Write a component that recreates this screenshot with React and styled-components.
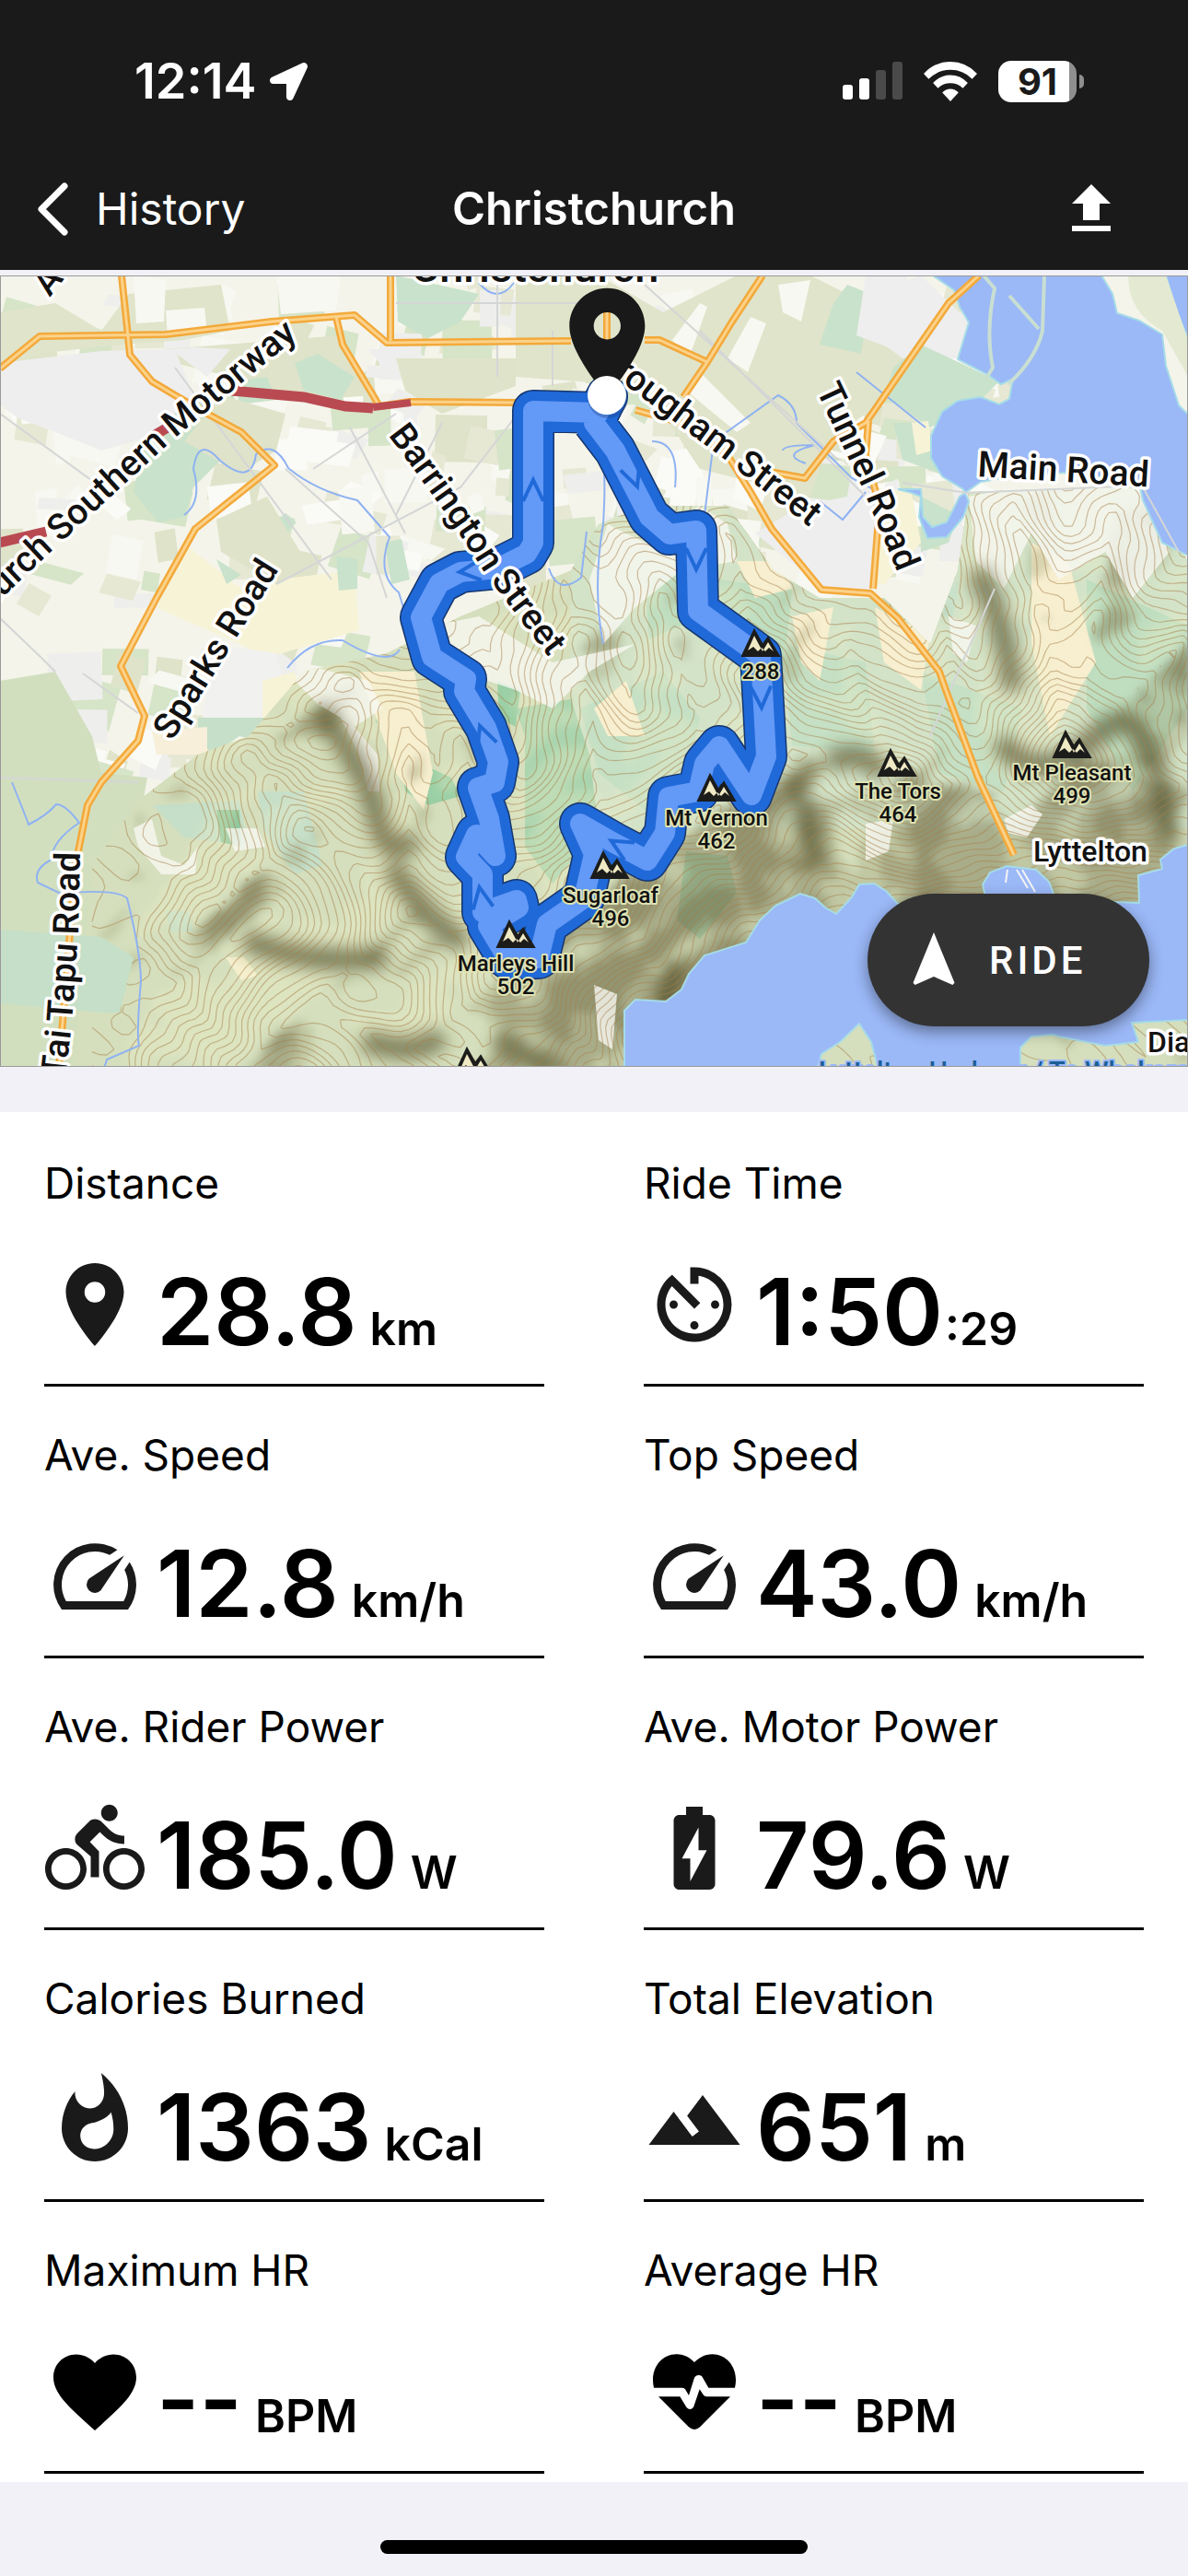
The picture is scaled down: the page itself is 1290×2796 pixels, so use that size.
import styled, { createGlobalStyle } from "styled-components";
import {
    MdPlace,
    MdAvTimer,
    MdDirectionsBike,
    MdBatteryChargingFull,
    MdWhatshot,
    MdTerrain,
    MdFavorite,
    MdNavigation,
    MdUpload,
} from "react-icons/md";
import { FaLocationArrow } from "react-icons/fa";

const GlobalStyle = createGlobalStyle`
    * { box-sizing: border-box; }
    body {
        margin: 0;
        background-color: #f2f1f7;
        color: #000;
        font-family: Inter, "Liberation Sans", sans-serif;
    }
`

/* Terrain  */

const RIDGES = [
    [270, 520, 0.4, 340, 600, 0.55], [340, 600, 0.55, 450, 690, 0.8], [450, 690, 0.8, 560, 745, 1],
    [560, 745, 1, 663, 660, 1], [663, 660, 1, 778, 580, 0.95], [778, 580, 0.95, 860, 520, 0.85],
    [860, 520, 0.85, 975, 545, 0.95], [975, 545, 0.95, 1070, 560, 0.7], [1070, 560, 0.7, 1164, 520, 1],
    [1164, 520, 1, 1290, 560, 0.8], [663, 660, 0.9, 630, 400, 0.5], [630, 400, 0.5, 600, 300, 0.35],
    [778, 580, 0.8, 715, 330, 0.5], [826, 430, 0.75, 790, 280, 0.45], [860, 520, 0.8, 826, 430, 0.75],
    [975, 545, 0.9, 920, 400, 0.5], [1164, 520, 0.9, 1100, 250, 0.55], [1164, 520, 0.9, 1210, 260, 0.5],
    [1164, 520, 0.9, 1285, 400, 0.6], [450, 690, 0.8, 440, 480, 0.45], [560, 745, 0.9, 500, 500, 0.5],
    [560, 745, 1, 430, 859, 0.7], [330, 600, 0.5, 200, 720, 0.25], [450, 690, 0.7, 260, 859, 0.6],
    [515, 859, 1, 330, 800, 0.6], [560, 745, 0.9, 660, 859, 0.5], [663, 660, 0.9, 730, 770, 0.4],
    [778, 580, 0.8, 820, 700, 0.3], [860, 520, 0.8, 905, 660, 0.3], [975, 545, 0.8, 1000, 660, 0.3],
    [300, 500, 0.3, 380, 440, 0.3], [1040, 440, 0.5, 1010, 340, 0.3],
]

function height(x, y) {
    let total = 0
    for (const [x1, y1, h1, x2, y2, h2] of RIDGES) {
        const dx = x2 - x1
        const dy = y2 - y1
        const t = Math.max(0, Math.min(1, ((x - x1) * dx + (y - y1) * dy) / (dx * dx + dy * dy)))
        const d = Math.hypot(x - x1 - t * dx, y - y1 - t * dy)
        const v = Math.max(0, h1 + (h2 - h1) * t - d / 200)
        total += v ** 5
    }
    const noise =
        Math.sin(x / 17 + 2 * Math.sin(y / 29)) * Math.sin(y / 19 + Math.sin(x / 23)) * 0.04 +
        Math.sin(x / 37 - y / 31) * 0.04
    return total ** 0.2 + noise
}

// marching squares over a coarse grid, one path for all levels
function buildContours() {
    const s = 8
    let d = ""
    for (let y = 200; y < 860; y += s) {
        for (let x = 100; x < 1290; x += s) {
            const c = [[x, y], [x + s, y], [x + s, y + s], [x, y + s]]
            const h = c.map(([a, b]) => height(a, b))
            const lo = Math.ceil(Math.min(...h) / 0.045)
            const hi = Math.floor(Math.max(...h) / 0.045)
            for (let n = lo; n <= hi; n++) {
                const level = n * 0.045
                const pts = []
                for (let i = 0; i < 4; i++) {
                    const j = (i + 1) % 4
                    if (h[i] < level !== h[j] < level) {
                        const t = (level - h[i]) / (h[j] - h[i])
                        pts.push(
                            (c[i][0] + (c[j][0] - c[i][0]) * t).toFixed(1) + " " +
                            (c[i][1] + (c[j][1] - c[i][1]) * t).toFixed(1)
                        )
                    }
                }
                for (let i = 0; i + 1 < pts.length; i += 2) d += `M${pts[i]}L${pts[i + 1]}`
            }
        }
    }
    return d
}

// slopes facing away from the north-west light get darker
function buildShade() {
    const s = 8
    const tones = ["", "", "", ""]
    for (let y = 200; y < 860; y += s) {
        for (let x = 100; x < 1290; x += s) {
            const slope = height(x, y) - height(x + 10, y + 10)
            const cell = `M${x} ${y}h${s}v${s}h-${s}z`
            if (slope < -0.05) tones[0] += cell
            if (slope > 0.03) tones[1] += cell
            if (slope > 0.055) tones[2] += cell
            if (slope > 0.085) tones[3] += cell
        }
    }
    return tones
}

// small farm and suburb parcels
function buildParcels() {
    const colors = ["#dfe3c9", "#f8f8f2", "#eeeeec", "#e6e8d3", "#d6e4c8", "#fafaf6"]
    const out = []
    let seed = 7
    const rnd = () => {
        seed = (seed * 16807) % 2147483647
        return seed / 2147483647
    }
    for (let i = 0; i < 330; i++) {
        const x = rnd() * 1080
        const y = rnd() * (x < 350 ? 560 : 310)
        const w = 14 + rnd() * 44
        const h = 12 + rnd() * 40
        const k = (rnd() - 0.3) * 22
        out.push([
            colors[Math.floor(rnd() * colors.length)],
            `${x},${y} ${x + w},${y + k} ${x + w - k},${y + h + k} ${x - k},${y + h}`,
        ])
    }
    return out
}

const CONTOURS = buildContours()
const [LIT, SHADE1, SHADE2, SHADE3] = buildShade()
const PARCELS = buildParcels()

const LAND = [
    ["#e0e4ca", "0,40 60,30 110,60 140,20 240,10 250,60 200,70 130,75 40,85 0,110"],
    ["#f8f8f2", "145,0 180,5 178,50 148,52"],
    ["#f8f8f2", "180,38 222,35 225,62 182,66"],
    ["#f8f8f2", "300,0 370,0 365,38 305,42"],
    ["#e0e4ca", "560,0 650,0 720,40 800,0 880,0 960,40 1010,60 980,120 900,180 880,240 760,210 700,120 560,110"],
    ["#f8f8f2", "730,70 760,30 768,34 748,90"],
    ["#f8f8f2", "790,90 815,45 832,52 812,105"],
    ["#f8f8f2", "745,125 760,105 815,160 800,170"],
    ["#f8f8f2", "845,10 880,5 870,50 850,40"],
    ["#dfe3c9", "180,80 370,65 410,130 330,135 250,110 190,95"],
    ["#dfe3c9", "430,90 560,90 560,120 480,150 440,125"],
    ["#c9e2cb", "430,0 520,20 500,50 465,68 432,50"],
    ["#c9e2cb", "160,165 250,120 270,180 240,200 210,230 200,262 172,268 145,235"],
    ["#c9e2cb", "320,95 345,85 385,110 370,135 330,125"],
    ["#c9e2cb", "255,115 290,110 300,135 260,140"],
    ["#eeeeee", "0,95 110,82 190,80 210,130 165,175 110,190 60,170 20,155 0,140"],
    ["#eeeeee", "185,80 225,110 250,80 210,78"],
    ["#eeeeee", "400,80 435,80 420,105"],
    ["#f7f3d7", "205,295 262,340 300,330 385,320 390,385 290,415 250,395 190,370 170,360"],
    ["#c9e2cb", "365,305 388,308 388,340 368,342"],
    ["#c9e2cb", "235,308 262,325 246,335"],
    ["#c9e2cb", "290,275 310,258 322,268 300,290"],
    ["#c9e2cb", "418,290 436,286 445,330 425,335"],
    ["#dfe3c9", "235,265 290,240 335,315 300,335 240,300"],
    ["#dfe3c9", "200,180 240,130 310,150 300,190 260,215"],
    ["#f1f1f0", "230,400 300,410 320,490 220,480"],
    ["#f7f3d7", "285,440 320,430 335,500 285,480"],
    ["#c5dfc8", "215,480 320,480 320,495 300,508 260,500 230,520 215,500"],
    ["#f7efd9", "165,495 225,490 225,520 170,520"],
    ["#eeeeee", "970,10 1000,0 1052,50 1040,90 980,90 940,60 950,20"],
    ["#c9e2cb", "905,30 920,10 945,20 935,85 890,75"],
    ["#c9e2cb", "1000,75 1085,115 1060,140 1010,165 960,130 970,100"],
    ["#c9e2cb", "970,160 1000,160 1020,215 980,200"],
    ["#f7f3d7", "990,160 1008,158 1012,190 995,195"],
    ["#eeeeee", "820,280 870,250 920,240 955,240 945,345 895,340"],
    ["#eeeeee", "940,0 985,0 970,80 930,65"],
    ["#f7f3d7", "950,230 990,235 1000,290 960,335 948,335"],
    ["#c9e2cb", "1000,240 1040,260 1030,290 1000,300"],
]

const WOODS = [
    ["#c6dfc8", "165,575 260,570 270,620 200,610"],
    ["#8fc79c", "235,580 260,580 262,620 240,615"],
    ["#c6dfc8", "280,560 330,560 350,640 320,650 285,600"],
    ["#c6dfc8", "180,690 205,690 210,712 185,712"],
    ["#9bcfa5", "410,455 430,450 430,495 408,485"],
    ["#9bcfa5", "435,520 490,545 500,565 465,575 440,560"],
    ["#a9d4ae", "560,470 620,460 640,520 650,600 600,660 570,620 570,500"],
    ["#9bcfa5", "540,440 565,450 560,490 542,480"],
    ["#c5e0c4", "630,470 720,430 760,480 740,560 700,580 650,540"],
    ["#bfdec0", "780,330 860,340 850,440 790,400"],
    ["#bfdec0", "700,330 740,320 740,380 705,395"],
    ["#c5e0c4", "850,400 940,420 950,520 860,510"],
    ["#c5e0c4", "1000,430 1110,470 1090,560 1020,540"],
    ["#a9d4ae", "745,625 790,630 800,670 760,720 735,700"],
    ["#c9e2cb", "1010,310 1045,310 1035,370 1015,370"],
    ["#bfdec0", "1180,330 1290,380 1290,470 1230,560 1180,470"],
    ["#f7efd0", "950,360 1010,390 1000,450 960,420"],
    ["#f7efd0", "800,310 850,310 860,340 820,350"],
    ["#f7efd0", "860,370 905,360 890,440 870,420"],
    ["#f7efd0", "390,430 450,430 470,540 460,580 430,540"],
    ["#f7efd0", "1120,290 1160,310 1190,420 1140,500 1120,400"],
    ["#f7efd0", "645,470 680,440 700,500 660,500"],
    ["#f7efd0", "245,740 265,740 280,760 262,765"],
]

const BARE = [
    "315,435 340,425 400,440 415,470 385,490 410,520 412,560 400,560 390,520 370,480 345,465",
    "470,380 520,370 600,420 690,400 640,430 600,470 560,450 500,430",
    "660,270 700,290 760,250 790,270 800,310 740,320 690,360 655,400 640,330",
    "1052,240 1130,225 1240,232 1270,300 1230,350 1200,300 1150,330 1120,280 1090,340 1060,310",
    "145,600 165,590 175,630 200,640 215,620 212,650 175,650 150,620",
    "245,600 280,600 288,620 255,625",
    "1090,590 1120,575 1132,585 1115,610 1095,605",
    "1030,370 1060,380 1050,420 1035,410",
    "940,595 970,590 965,625 940,635",
    "645,770 670,780 665,840 650,830",
]

const DARK_SPOTS = [
    "M345 470 Q400 540 410 590 T450 610",
    "M425 640 Q460 700 505 725",
    "M265 720 Q330 750 420 740",
    "M395 830 Q450 850 480 825",
    "M900 530 Q930 510 960 540",
    "M860 545 Q880 600 890 640",
    "M1085 505 Q1130 560 1190 500 T1270 620",
    "M1060 320 Q1090 370 1100 450",
    "M730 810 Q710 780 740 750",
    "M540 825 Q570 850 600 859",
]

const WATER = [
    "1013,0 1036,16 1042,34 1052,51 1040,91 1073,108 1087,118 1100,112 1096,134 1085,140 1065,132 1040,136 1023,148 1011,174 1011,198 1023,218 1046,232 1052,245 1046,262 1028,284 1007,285 998,262 1000,240 990,236 975,232 1000,232 1002,262 1012,273 1028,268 1042,240 1065,224 1110,216 1159,214 1237,224 1241,244 1262,290 1290,304 1290,151 1280,141 1266,98 1262,64 1237,49 1213,41 1208,20 1196,0",
    "1266,0 1290,0 1290,68 1278,40",
    "678,859 678,798 690,786 723,788 740,775 748,758 765,738 810,724 825,700 842,684 869,671 885,676 896,686 908,693 925,675 933,661 949,660 962,668 974,681 1000,700 1130,700 1210,680 1237,681 1236,651 1262,644 1260,634 1275,622 1290,618 1290,808 1229,811 1236,832 1200,836 1150,826 1143,824 1120,826 1108,838 1108,859 953,859 946,832 933,812 912,832 892,845 888,859",
    "1067,661 1075,648 1093,641 1125,645 1139,658 1145,674 1070,674",
]

const STREAMS = [
    "M520 8 q20 24 38 0",
    "M200 260 q20 -14 10 -50 q5 -36 28 -10 q35 30 40 -6 q20 -16 35 15 q30 25 75 35 l35 40 q-15 40 10 60 l8 26",
    "M312 426 q25 -32 60 -30 q50 30 62 10",
    "M13 550 q20 50 18 46 q20 -10 30 -22 q10 0 25 20 q-30 20 -30 40 q-20 10 -15 25 l25 12 q60 -6 72 5 q15 60 15 90 q-5 60 -2 70 l-35 15 l-12 40",
    "M655 400 q-12 -60 0 -130 q5 -80 -8 -100 M708 180 q30 0 25 50 M765 260 l10 -80 l70 -50 q20 10 20 30 l60 60 l50 26",
    "M850 190 q0 -6 35 -6 q-40 10 -10 20 M930 105 l75 60 M890 245 l25 20 l25 -30",
    "M596 318 q10 30 35 10 l6 -50",
]

const MAJOR_ROADS = [
    "M0 101 L43 66 L180 64 L295 50 L385 43 L420 73 L620 71",
    "M132 0 L139 66 L141 86 L165 115 L190 130 L225 150 L262 170 L298 206 L212 275 L170 350 L131 424 L157 478 L150 505 L110 550 L95 575 L82 640 L64 859",
    "M365 45 L372 75 L405 130 L412 142 L445 137 L560 138",
    "M424 0 L424 71",
    "M659 28 L659 71 M700 70 L716 70 L768 94 L742 132 M768 94 L795 50 L828 0",
    "M1063 0 L1030 30 L940 160 L905 180 L874 220 L830 212 M943 158 L940 195 L955 250 L948 340",
    "M690 146 L740 160 L790 195 L815 235 L838 275 L892 341 L945 345 L975 372 L1020 430 L1027 450 L1062 545 L1101 629",
]

const MINOR_ROADS = [
    "M0 372 L45 415 L60 430", "M190 100 L360 330 M300 335 L500 230 L570 140", "M310 210 L400 290 L420 350",
    "M0 150 L110 230", "M470 140 L560 140", "M480 160 L430 260", "M380 165 L440 280", "M340 210 L430 150",
    "M700 10 L910 200 M760 60 L950 250", "M600 60 L600 120", "M980 225 L1050 236 L1240 228 L1280 300",
    "M0 545 L150 550 M90 432 L150 475", "M430 30 L640 30 M540 0 L540 110", "M1010 500 L1080 340",
]

const ROUTE =
    "M659 131 L650 149 L579 147 L579 290 L572 302 L540 318 L500 322 L477 334 L457 371 L469 414 L506 438 L504 451 L528 491 L541 528 L537 550 L519 556 L531 590 L538 630 L517 607 L506 631 L524 650 L524 691 L561 678 L563 686 L530 706 L551 741 L585 741 L594 704 L634 676 L645 628 L630 595 L665 615 L703 635 L722 605 L726 566 L758 560 L765 530 L781 511 L816 564 L832 522 L826 413 L758 364 L756 277 L727 281 L705 262 L668 190 L645 160"

const ARROWS = [
    [579, 219, 0], [496, 322, -95], [520, 486, -20], [520, 661, -10],
    [693, 232, 160], [756, 322, 180], [827, 472, 178], [661, 612, -60],
]

const PEAKS = [
    [826, 413, 826, 438, "", "288"],
    [778, 570, 778, 597, "Mt Vernon", "462"],
    [662, 654, 663, 681, "Sugarloaf", "496"],
    [560, 729, 560, 755, "Marleys Hill", "502"],
    [974, 543, 975, 568, "The Tors", "464"],
    [1164, 523, 1164, 548, "Mt Pleasant", "499"],
    [514, 867, 514, 900, "", ""],
]

const ROAD_LABELS = [
    ["motorway", "M-140 481 L0 352 L68 288 L195 172 L324 66", "Christchurch Southern Motorway", "end"],
    ["barrington", "M421 173 Q486 258 527 324 L620 446", "Barrington Street", "start"],
    ["brougham", "M610 62 L682 121 L779 194 L879 273", "Brougham Street", "end"],
    ["tunnel", "M886 124 L938 234 L990 360", "Tunnel Road", "start"],
    ["sparks", "M187 506 L259 390 L320 292", "Sparks Road", "start"],
    ["main", "M1061 218 L1290 232", "Main Road", "start"],
    ["taitapu", "M68 900 L78 811 L85 714 L87 626", "Tai Tapu Road", "end"],
]

function RideMap() {
    return (
        <MapSvg viewBox="0 0 1290 859" preserveAspectRatio="xMidYMid slice" role="img" aria-label="Ride map">
            <defs>
                <filter id="soft" x="-5%" y="-5%" width="110%" height="110%">
                    <feGaussianBlur stdDeviation="5" />
                </filter>
                <filter id="softer" x="-20%" y="-20%" width="140%" height="140%">
                    <feGaussianBlur stdDeviation="9" />
                </filter>
                <clipPath id="hills">
                    <path d="M80 859 L90 760 L100 640 L150 570 L215 520 L270 500 L330 430 L420 410 L500 370 L620 320 L650 270 L700 250 L790 250 L840 320 L890 350 L960 350 L1010 400 L1040 320 L1052 235 L1240 228 L1290 310 L1290 859 Z" />
                </clipPath>
                {ROAD_LABELS.map(([id, d]) => <path key={id} id={id} d={d} />)}
            </defs>

            <rect width="1290" height="859" fill="#f4f4ea" />
            {PARCELS.map(([fill, points], i) => <polygon key={i} fill={fill} points={points} />)}
            {LAND.map(([fill, points], i) => <polygon key={i} fill={fill} points={points} />)}
            <path d="M0 440 L60 430 L100 500 L110 540 L160 545 L150 600 L200 859 L0 859 Z" fill="#d2dfbf" />

            <g clipPath="url(#hills)">
                <rect y="200" width="1290" height="659" fill="#d5dfbd" />
                <rect x="620" y="200" width="670" height="400" fill="#d3e3c8" />
                {WOODS.map(([fill, points], i) => <polygon key={i} fill={fill} points={points} />)}
                <g filter="url(#soft)">
                    <path d={LIT} fill="#eef0c8" opacity="0.3" />
                    <path d={SHADE1} fill="#87895f" opacity="0.28" />
                    <path d={SHADE2} fill="#73724c" opacity="0.3" />
                    <path d={SHADE3} fill="#5f5c3a" opacity="0.3" />
                </g>
                {BARE.map((points, i) => <polygon key={i} fill="#f8f7f1" opacity="0.8" points={points} />)}
                <g filter="url(#softer)" fill="none" stroke="#46421f" strokeWidth="24" opacity="0.6">
                    {DARK_SPOTS.map((d) => <path key={d} d={d} />)}
                </g>
                <path d={CONTOURS} fill="none" stroke="#a87f4c" strokeWidth="1.2" opacity="0.5" />
            </g>
            <polygon points="0,710 110,718 145,740 130,800 110,800 0,790" fill="#c5dfc8" />

            <g fill="#9bb8f7" stroke="#a5dbe8" strokeWidth="2">
                {WATER.map((points) => <polygon key={points} points={points} />)}
            </g>
            <g fill="none" stroke="#c9dfd2" strokeWidth="4">
                <path d="M1068 0 L1080 14 Q1070 60 1078 100 L1072 110" />
                <path d="M1134 0 L1132 60 Q1125 90 1095 118 M1096 22 L1128 58" />
            </g>
            <path d="M1225 0 L1266 0 L1290 70 L1290 110 L1262 60 Q1225 40 1225 0" fill="#e4ead2" />
            <path d="M1092 659 l2 -14 M1104 645 l12 20 M1110 645 l14 24" stroke="#f4f4f4" strokeWidth="2" />

            <g fill="none" stroke="#8fb2f2" strokeWidth="2">
                {STREAMS.map((d) => <path key={d} d={d} />)}
            </g>
            <g fill="none" stroke="#d4d6d6" strokeWidth="2">
                {MINOR_ROADS.map((d) => <path key={d} d={d} />)}
            </g>
            <g fill="none" stroke="#f3a93a" strokeWidth="8" strokeLinejoin="round">
                {MAJOR_ROADS.map((d) => <path key={d} d={d} />)}
            </g>
            <g fill="none" stroke="#fbd28a" strokeWidth="3" strokeLinejoin="round">
                {MAJOR_ROADS.map((d) => <path key={d} d={d} />)}
            </g>
            <path d="M0 290 L50 278 M165 175 L182 165 M250 125 L330 132 L375 142 L405 144" fill="none" stroke="#b94a52" strokeWidth="11" />
            <path d="M405 143 L446 138" stroke="#b94a52" strokeWidth="8" />

            <g fill="none" strokeLinejoin="round" strokeLinecap="round">
                <path d={ROUTE} stroke="#16366e" strokeWidth="46" />
                <path d={ROUTE} stroke="#2069d8" strokeWidth="43" />
                <path d={ROUTE} stroke="#6399f7" strokeWidth="22" />
            </g>
            {ARROWS.map(([x, y, r]) => (
                <path
                    key={`${x}-${y}`}
                    d="M-11 26 L0 3 L11 26"
                    transform={`translate(${x} ${y}) rotate(${r})`}
                    fill="none"
                    stroke="#2069d8"
                    strokeWidth="4"
                />
            ))}

            {ROAD_LABELS.map(([id, , label, anchor]) => (
                <RoadLabel key={id} $size={39} textAnchor={anchor}>
                    <textPath href={`#${id}`} startOffset={anchor === "end" ? "100%" : "0"}>{label}</textPath>
                </RoadLabel>
            ))}
            <RoadLabel $size={47} x="581" y="7" textAnchor="middle">Christchurch</RoadLabel>
            <RoadLabel $size={39} transform="translate(54 24) rotate(-52)">A</RoadLabel>
            <RoadLabel $size={32} x="1184" y="636" textAnchor="middle">Lyttelton</RoadLabel>
            <RoadLabel $size={32} x="1246" y="843">Dia</RoadLabel>
            <HarbourLabel x="889" y="874">Lyttelton Harbour / Te Whakaraupō</HarbourLabel>

            {PEAKS.map(([x, y, tx, ty, name, metres]) => (
                <g key={`${x}-${y}`}>
                    <path
                        d="M-20 0 L-7 -28 L2 -12 L8 -20 L20 0 Z"
                        transform={`translate(${x} ${y})`}
                        fill="#1c1c1a"
                        stroke="#1c1c1a"
                        strokeWidth="2"
                    />
                    <path
                        d="M-14 -6 L-7 -22 L2 -5 L8 -15 L14 -5 L9 -9 L5 -5 L1 -9 L-3 -5 L-8 -10 Z"
                        transform={`translate(${x} ${y})`}
                        fill="#efeac4"
                    />
                    {metres && <PeakLabel x={tx} y={ty} textAnchor="middle">{name || metres}</PeakLabel>}
                    {name && <PeakLabel x={tx} y={ty + 25} textAnchor="middle">{metres}</PeakLabel>}
                </g>
            ))}

            <path
                d="M12 2C8.13 2 5 5.13 5 9c0 5.25 7 13 7 13s7-7.75 7-13c0-3.87-3.13-7-7-7zm0 9.5a2.5 2.5 0 0 1 0-5 2.5 2.5 0 0 1 0 5z"
                transform="translate(589 2) scale(5.86)"
                fill="#191919"
            />
            <circle cx="660" cy="133" r="22" fill="#1c3f80" opacity="0.35" />
            <circle cx="659" cy="130" r="21" fill="#fff" />
            <rect width="1290" height="859" fill="none" stroke="#9a9a9a" strokeWidth="2" />
        </MapSvg>
    )
}

function SpeedIcon() {
    return (
        <svg viewBox="0 0 24 24" fill="currentColor" aria-hidden="true">
            <path d="M20.38 8.57l-1.23 1.85a8 8 0 0 1-.22 7.58H5.07A8 8 0 0 1 15.58 6.85l1.85-1.23A10 10 0 0 0 4 20h16a10 10 0 0 0 .38-11.43z" />
            <path d="M10.59 15.41a2 2 0 0 0 2.83 0l5.66-8.49-8.49 5.66a2 2 0 0 0 0 2.83z" />
        </svg>
    )
}

function HeartPulseIcon() {
    return (
        <svg viewBox="32 9 324 324" fill="currentColor" aria-hidden="true">
            <path d="M194 75C170 50 145 49 135 49C92 49 59 86 59 133C59 142 60 150 62 158H155Q161 158 164 163L176 183L193 128Q197 117 208 117Q218 117 222 127L240 158H326Q329 146 329 133C329 86 296 49 252 49C230 49 208 60 194 75Z" />
            <path d="M77 187H147L168 221Q173 228 181 228Q189 227 192 219L211 163L223 181Q227 187 234 187H311L213 285Q194 303 175 285Z" />
        </svg>
    )
}

const STATS = [
    { label: "Distance", value: "28.8", unit: "km", icon: MdPlace },
    { label: "Ride Time", value: "1:50", unit: ":29", icon: MdAvTimer, tight: true },
    { label: "Ave. Speed", value: "12.8", unit: "km/h", icon: SpeedIcon },
    { label: "Top Speed", value: "43.0", unit: "km/h", icon: SpeedIcon },
    { label: "Ave. Rider Power", value: "185.0", unit: "W", icon: MdDirectionsBike },
    { label: "Ave. Motor Power", value: "79.6", unit: "W", icon: MdBatteryChargingFull },
    { label: "Calories Burned", value: "1363", unit: "kCal", icon: MdWhatshot },
    { label: "Total Elevation", value: "651", unit: "m", icon: MdTerrain },
    { label: "Maximum HR", value: "--", unit: "BPM", icon: MdFavorite, color: "#000" },
    { label: "Average HR", value: "--", unit: "BPM", icon: HeartPulseIcon, color: "#000" },
]

export default function App() {
    return (
        <Page>
            <GlobalStyle />
            <Header>
                <StatusBar>
                    <StatusGroup $gap={14}>
                        <Clock>12:14</Clock>
                        <FaLocationArrow size={41} />
                    </StatusGroup>
                    <StatusGroup $gap={23}>
                        <svg width="65" height="42" viewBox="0 0 65 42" fill="#fff" aria-hidden="true">
                            <rect y="25" width="11" height="16" rx="3" />
                            <rect x="18" y="18" width="11" height="23" rx="3" />
                            <rect x="36" y="9" width="11" height="32" rx="3" fill="#4a4a4a" />
                            <rect x="54" width="11" height="41" rx="3" fill="#4a4a4a" />
                        </svg>
                        <svg width="58" height="43" viewBox="0 0 172 127" fill="#fff" aria-hidden="true">
                            <path d="M0 38Q36 0 86 0T172 38L156 55Q126 26 86 26T16 55Z" />
                            <path d="M30 68Q54 43 86 43T142 68L126 85Q109 69 86 69T46 85Z" />
                            <path d="M60 99Q71 87 86 87T112 99L86 127Z" />
                        </svg>
                        <Battery>
                            <BatteryBody>91</BatteryBody>
                            <BatteryNub />
                        </Battery>
                    </StatusGroup>
                </StatusBar>
                <NavBar>
                    <BackButton type="button">
                        <svg width="34" height="58" viewBox="0 0 34 58" aria-hidden="true">
                            <path d="M30 4L5 29L30 54" fill="none" stroke="#fff" strokeWidth="7" strokeLinecap="round" strokeLinejoin="round" />
                        </svg>
                        History
                    </BackButton>
                    <Title>Christchurch</Title>
                    <ShareButton type="button" aria-label="Share ride">
                        <MdUpload size={72} />
                    </ShareButton>
                </NavBar>
            </Header>

            <MapArea>
                <RideMap />
                <RideButton type="button">
                    <MdNavigation size={72} />
                    RIDE
                </RideButton>
            </MapArea>

            <Stats>
                {STATS.map(({ label, value, unit, icon: Icon, color, tight }) => (
                    <Stat key={label}>
                        <StatLabel>{label}</StatLabel>
                        <StatRow>
                            <IconBox $color={color}><Icon /></IconBox>
                            <Value>{value}<Unit $tight={tight}>{unit}</Unit></Value>
                        </StatRow>
                    </Stat>
                ))}
            </Stats>

            <Footer>
                <HomeIndicator />
            </Footer>
        </Page>
    )
}

const Page = styled.div`
    min-height: 100vh;
    display: flex;
    flex-direction: column;
`
/* Header  */

const Header = styled.header`
    background-color: #1a1a1a;
    color: white;
    padding-bottom: 15px;
`

const StatusBar = styled.div`
    height: 176px;
    padding: 0 113px 0 146px;
    display: flex;
    justify-content: space-between;
    align-items: center;
`

const StatusGroup = styled.div`
    display: flex;
    align-items: center;
    gap: ${(props) => props.$gap}px;
`

const Clock = styled.span`
    font-size: 54px;
    font-weight: 600;
    line-height: 60px;
`

const Battery = styled.div`
    display: flex;
    align-items: center;
    gap: 3px;
`

const BatteryBody = styled.span`
    width: 85px;
    height: 45px;
    border-radius: 14px;
    background: linear-gradient(to right, #fff 91%, #8e8e8e 91%);
    color: #1a1a1a;
    font-size: 40px;
    font-weight: 700;
    line-height: 45px;
    text-align: center;
`

const BatteryNub = styled.span`
    width: 5px;
    height: 15px;
    border-radius: 0 8px 8px 0;
    background-color: #8e8e8e;
`

const NavBar = styled.nav`
    height: 102px;
    padding: 0 40px;
    display: grid;
    grid-template-columns: 1fr auto 1fr;
    align-items: center;
`

const BackButton = styled.button`
    display: flex;
    align-items: center;
    gap: 30px;
    justify-self: start;
    padding: 0;
    border: none;
    background: none;
    color: inherit;
    font-family: inherit;
    font-size: 48px;
    line-height: 60px;
    cursor: pointer;
`

const Title = styled.h1`
    margin: 0;
    font-size: 49px;
    font-weight: 600;
    line-height: 60px;
`

const ShareButton = styled.button`
    display: flex;
    justify-self: end;
    padding: 0 29px;
    border: none;
    background: none;
    color: inherit;
    cursor: pointer;
`
/* Map  */

const MapArea = styled.section`
    position: relative;
    margin: 6px 0 49px;
`

const MapSvg = styled.svg`
    display: block;
    width: 100%;
`

const RoadLabel = styled.text`
    font-family: Roboto, "Liberation Sans", sans-serif;
    font-size: ${(props) => props.$size}px;
    font-weight: 500;
    fill: #111;
    stroke: #fff;
    stroke-width: 7px;
    stroke-linejoin: round;
    paint-order: stroke;
`

const HarbourLabel = styled(RoadLabel)`
    font-size: 29px;
    fill: #1a5f96;
    stroke: #9bb8f7;
    stroke-width: 4px;
`

const PeakLabel = styled(RoadLabel)`
    font-size: 24px;
    stroke: #dfe3b4;
    stroke-width: 4px;
`

const RideButton = styled.button`
    position: absolute;
    right: 42px;
    bottom: 44px;
    width: 306px;
    height: 144px;
    display: flex;
    align-items: center;
    gap: 24px;
    padding: 0 0 0 36px;
    border: none;
    border-radius: 72px;
    background-color: #333;
    box-shadow: 0 6px 16px rgba(0, 0, 0, 0.4);
    color: white;
    font-family: Roboto, "Liberation Sans", sans-serif;
    font-size: 42px;
    font-weight: 500;
    letter-spacing: 4px;
    cursor: pointer;
`
/* Stats  */

const Stats = styled.main`
    display: grid;
    grid-template-columns: 1fr 1fr;
    column-gap: 108px;
    padding: 3px 48px 9px;
    background-color: white;
`

const Stat = styled.section`
    padding: 46px 0 24px;
    border-bottom: 3px solid #000;
`

const StatLabel = styled.h2`
    margin: 0 0 50px;
    font-size: 46px;
    font-weight: 400;
    line-height: 56px;
`

const StatRow = styled.div`
    display: flex;
    align-items: flex-start;
    gap: 12px;
`

const IconBox = styled.span`
    width: 110px;
    height: 108px;
    display: flex;
    justify-content: center;
    color: ${(props) => props.$color || "#1a1a1a"};

    & > svg {
        width: 108px;
        height: 108px;
    }
`

const Value = styled.p`
    margin: 0;
    padding-top: 8px;
    font-size: 100px;
    font-weight: 600;
    line-height: 108px;
    white-space: nowrap;
`

const Unit = styled.span`
    margin-left: ${(props) => (props.$tight ? 2 : 14)}px;
    font-size: 50px;
    line-height: 1;
`
/* Footer  */

const Footer = styled.footer`
    flex: 1;
    display: flex;
    justify-content: center;
    align-items: flex-end;
    padding: 48px 0 24px;
`

const HomeIndicator = styled.div`
    width: 36%;
    height: 15px;
    border-radius: 8px;
    background-color: #000;
`
